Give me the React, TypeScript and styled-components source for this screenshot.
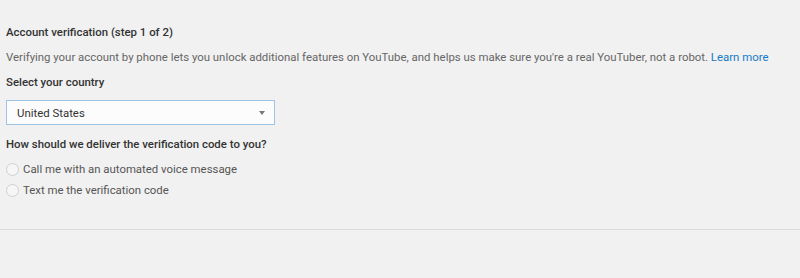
import { FC, useState } from 'react';
import styled, { createGlobalStyle } from 'styled-components';

const GlobalStyle = createGlobalStyle`
  html, body {
    margin: 0;
    padding: 0;
    background: #f1f1f1;
    font-family: Roboto, 'Liberation Sans', Arial, sans-serif;
  }
`;

const Page = styled.div`
  width: 800px;
  height: 278px;
  display: flex;
  flex-direction: column;
  background: #f1f1f1;
  overflow: hidden;
`;

const Section = styled.div`
  height: 230px;
  box-sizing: border-box;
  padding: 25px 0 0 6px;
  display: flex;
  flex-direction: column;
  border-bottom: 1px solid #dadada;
`;

const Heading = styled.div`
  font-size: 11.4px;
  font-weight: 500;
  color: #333;
  line-height: 14px;
  margin-bottom: 11px;
`;

const Text = styled.p`
  margin: 0 0 11px;
  font-size: 11.4px;
  line-height: 14px;
  color: #666;
`;

const Link = styled.a`
  color: #167ac6;
  text-decoration: none;
`;

const SelectBox = styled.div`
  width: 269px;
  height: 25px;
  box-sizing: border-box;
  border: 1px solid #9ec3e4;
  background: #fcfcfc;
  display: flex;
  align-items: center;
  justify-content: space-between;
  padding: 0 9px 0 10px;
  font-size: 11.4px;
  color: #333;
  margin-bottom: 12px;
`;

const Caret = styled.span`
  width: 0;
  height: 0;
  border-left: 3.5px solid transparent;
  border-right: 3.5px solid transparent;
  border-top: 4px solid #777;
`;

const Options = styled.div`
  display: flex;
  flex-direction: column;
  gap: 7px;
`;

const Option = styled.label`
  display: flex;
  align-items: center;
  gap: 4px;
  font-size: 11.4px;
  color: #555;
  height: 14px;
  cursor: pointer;
`;

const Radio = styled.span<{ $on: boolean }>`
  width: 13px;
  height: 13px;
  border-radius: 50%;
  border: 1px solid #d0d0d0;
  background: ${(p) => (p.$on ? '#167ac6' : '#f6f6f6')};
  box-sizing: border-box;
  flex-shrink: 0;
`;

const options = [
  'Call me with an automated voice message',
  'Text me the verification code',
];

const App: FC = () => {
  const [picked, setPicked] = useState<number | null>(null);

  return (
    <Page>
      <GlobalStyle />
      <Section>
        <Heading>Account verification (step 1 of 2)</Heading>
        <Text>
          Verifying your account by phone lets you unlock additional features on
          YouTube, and helps us make sure you're a real YouTuber, not a robot.{' '}
          <Link href="#">Learn more</Link>
        </Text>
        <Heading>Select your country</Heading>
        <SelectBox>
          United States
          <Caret />
        </SelectBox>
        <Heading>How should we deliver the verification code to you?</Heading>
        <Options>
          {options.map((label, i) => (
            <Option key={label} onClick={() => setPicked(i)}>
              <Radio $on={picked === i} />
              {label}
            </Option>
          ))}
        </Options>
      </Section>
    </Page>
  );
};

export default App;
